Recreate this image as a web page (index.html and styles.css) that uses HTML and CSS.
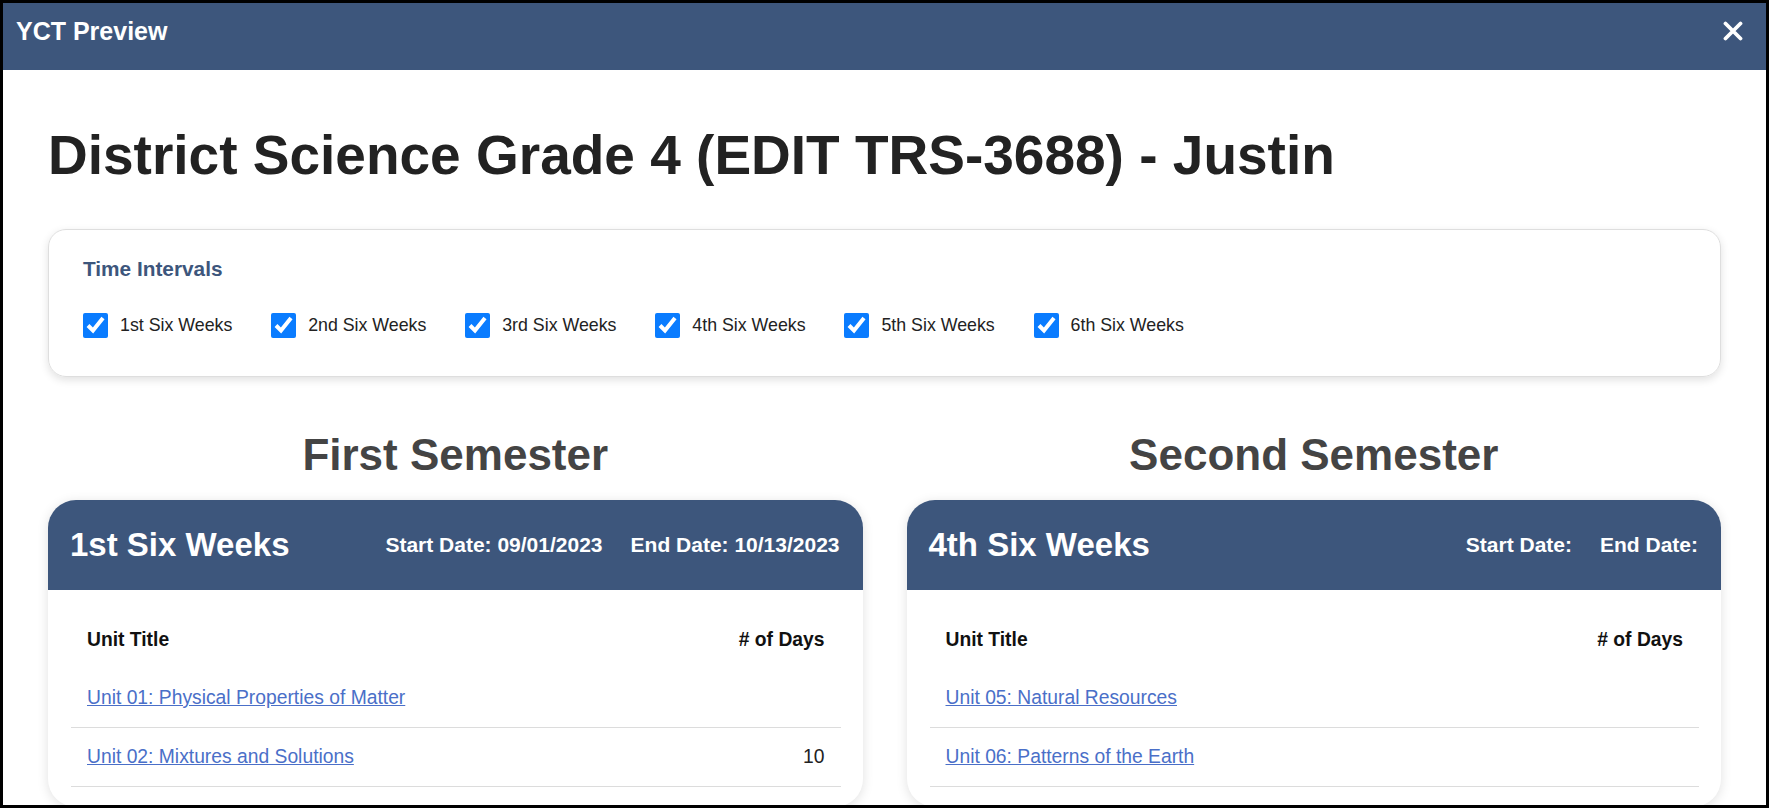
FILE: index.html
```html
<!DOCTYPE html>
<html lang="en">
<head>
  <meta charset="UTF-8">
  <title>YCT Preview</title>
  <link rel="stylesheet" href="styles.css">
</head>
<body>
  <div class="modal">
    <div class="modal-header">
      <span class="modal-title">YCT Preview</span>
      <button class="close-btn" type="button" aria-label="Close">
        <svg width="20" height="20" viewBox="0 0 20 20">
          <path d="M2.5 2.5 L17.5 17.5 M17.5 2.5 L2.5 17.5" stroke="#fff" stroke-width="3.8" stroke-linecap="round" fill="none"/>
        </svg>
      </button>
    </div>

    <div class="modal-body">
      <h1 class="page-title">District Science Grade 4 (EDIT TRS-3688) - Justin</h1>

      <div class="intervals">
        <div class="intervals-title">Time Intervals</div>
        <div class="intervals-list">
          <label class="interval"><input type="checkbox" checked> 1st Six Weeks</label>
          <label class="interval"><input type="checkbox" checked> 2nd Six Weeks</label>
          <label class="interval"><input type="checkbox" checked> 3rd Six Weeks</label>
          <label class="interval"><input type="checkbox" checked> 4th Six Weeks</label>
          <label class="interval"><input type="checkbox" checked> 5th Six Weeks</label>
          <label class="interval"><input type="checkbox" checked> 6th Six Weeks</label>
        </div>
      </div>

      <div class="semesters">
        <div class="semester">
          <h2>First Semester</h2>
          <div class="period-card">
            <div class="period-header">
              <span class="period-name">1st Six Weeks</span>
              <div class="period-dates">
                <span>Start Date: 09/01/2023</span>
                <span>End Date: 10/13/2023</span>
              </div>
            </div>
            <div class="period-body">
              <table class="units">
                <thead>
                  <tr><th>Unit Title</th><th class="days"># of Days</th></tr>
                </thead>
                <tbody>
                  <tr><td><a href="#">Unit 01: Physical Properties of Matter</a></td><td class="days"></td></tr>
                  <tr><td><a href="#">Unit 02: Mixtures and Solutions</a></td><td class="days">10</td></tr>
                </tbody>
              </table>
            </div>
          </div>
        </div>

        <div class="semester">
          <h2>Second Semester</h2>
          <div class="period-card">
            <div class="period-header">
              <span class="period-name">4th Six Weeks</span>
              <div class="period-dates">
                <span>Start Date:</span>
                <span>End Date:</span>
              </div>
            </div>
            <div class="period-body">
              <table class="units">
                <thead>
                  <tr><th>Unit Title</th><th class="days"># of Days</th></tr>
                </thead>
                <tbody>
                  <tr><td><a href="#">Unit 05: Natural Resources</a></td><td class="days"></td></tr>
                  <tr><td><a href="#">Unit 06: Patterns of the Earth</a></td><td class="days"></td></tr>
                </tbody>
              </table>
            </div>
          </div>
        </div>
      </div>
    </div>
  </div>
</body>
</html>
```

FILE: styles.css
```css
body {
  margin: 0;
  font-family: "Liberation Sans", Arial, sans-serif;
  background-color: #fff;
}

.modal {
  width: 1769px;
  height: 808px;
  box-sizing: border-box;
  border: 3px solid #000;
  overflow: hidden;
  background: #fff;
}

.modal-header {
  height: 67px;
  box-sizing: border-box;
  padding: 0 23px 11px 13px;
  background-color: #3d567c;
  display: flex;
  align-items: center;
  justify-content: space-between;
}

.modal-title {
  color: #fff;
  font-size: 25px;
  font-weight: bold;
}

.close-btn {
  background: none;
  border: none;
  padding: 0;
  width: 20px;
  height: 20px;
  cursor: pointer;
  display: flex;
}

.modal-body {
  padding: 52px 45px 0;
}

.page-title {
  margin: 0 0 41px;
  font-size: 55px;
  line-height: 1.2;
  color: #222;
}

.intervals {
  border: 1px solid #dedede;
  border-radius: 18px;
  padding: 27px 33px 38px 34px;
  box-shadow: 0 3px 8px rgba(0, 0, 0, 0.12);
}

.intervals-title {
  font-size: 20.8px;
  line-height: 1.2;
  font-weight: bold;
  color: #3d567c;
  margin-bottom: 31px;
}

.intervals-list {
  display: flex;
  gap: 38.8px;
}

.interval {
  display: flex;
  align-items: center;
  gap: 12px;
  font-size: 17.8px;
  line-height: 1.2;
  color: #222;
  white-space: nowrap;
}

.interval input {
  width: 25px;
  height: 25px;
  margin: 0;
  accent-color: #0a7cff;
}

.semesters {
  display: grid;
  grid-template-columns: 1fr 1fr;
  gap: 44px;
  margin-top: 52px;
}

.semester h2 {
  margin: 0 0 18px;
  text-align: center;
  font-size: 44px;
  line-height: 1.2;
  color: #444;
}

.period-card {
  border-radius: 28px;
  overflow: hidden;
  background: #fff;
  box-shadow: 0 2px 12px rgba(0, 0, 0, 0.12);
}

.period-header {
  height: 90px;
  box-sizing: border-box;
  padding: 0 23px 0 22px;
  background-color: #3d567c;
  color: #fff;
  display: flex;
  align-items: center;
  justify-content: space-between;
}

.period-name {
  font-size: 33px;
  font-weight: bold;
}

.period-dates {
  display: flex;
  gap: 28px;
  font-size: 21px;
  font-weight: bold;
}

.period-body {
  padding: 21px 22px 20px 23px;
}

.units {
  width: 100%;
  border-collapse: collapse;
  font-size: 19.3px;
  line-height: 22px;
  color: #222;
}

.units th,
.units td {
  padding: 18px 16px;
  text-align: left;
}

.units th {
  color: #111;
}

.units tbody td {
  border-bottom: 1px solid #dcdcdc;
}

.units .days {
  text-align: right;
  width: 120px;
}

.units a {
  color: #4a6fc8;
}
```
